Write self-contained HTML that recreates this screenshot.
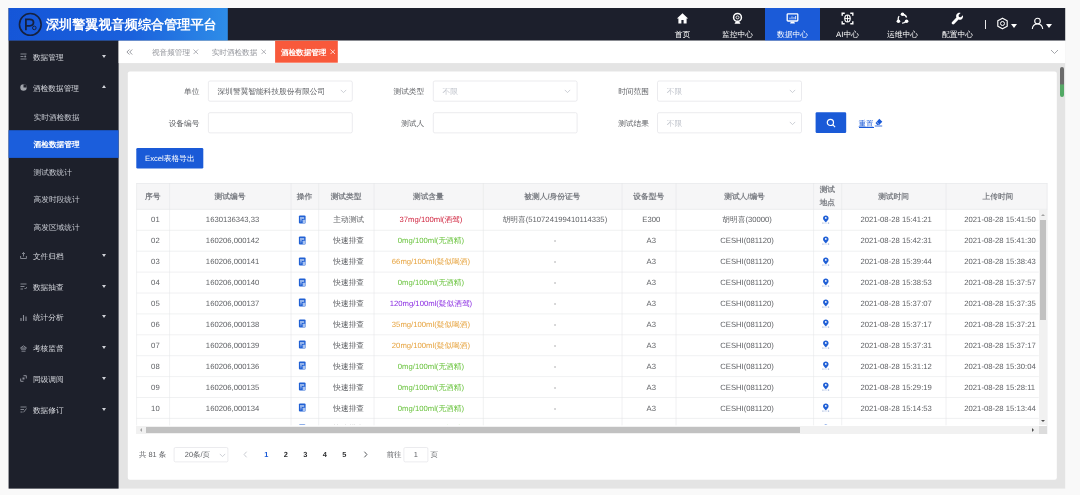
<!DOCTYPE html>
<html lang="zh">
<head>
<meta charset="utf-8">
<title>深圳警翼视音频综合管理平台</title>
<style>
*{box-sizing:border-box;margin:0;padding:0}
html,body{width:1080px;height:495px;overflow:hidden;background:#f9f9f9;font-family:"Liberation Sans",sans-serif;font-size:7.7px;color:#606266;text-rendering:geometricPrecision}
body{position:relative}
#w{position:absolute;left:0;top:0;width:1080px;height:495px;filter:blur(0.4px)}
.a{position:absolute;white-space:nowrap}
.c{text-align:center}
#ttl{left:45.9px;top:14.6px;width:176px;height:20px;line-height:20px;font-size:13.15px;font-weight:bold;color:#fff}
.nv{top:8px;width:55px;height:32.6px;color:#fff}
.nv span{position:absolute;left:0;width:55px;top:22.3px;height:9px;line-height:9px;text-align:center;font-size:7.8px;color:#fff}
.nv svg{position:absolute;left:21px;top:4.3px}
.mi{left:8.5px;width:110px;color:#d5d7dd}
.mi b{position:absolute;left:24.4px;font-weight:normal;top:1.25px}
.mi.s b{left:25px;top:0.9px;color:#c6c9d1}
.mi.act b{color:#fff;font-weight:bold}
.car{position:absolute;left:93.6px;width:0;height:0;border-left:2.8px solid transparent;border-right:2.8px solid transparent;border-top:3.3px solid #d0d2d8}
.car.up{border-top:none;border-bottom:3.3px solid #d0d2d8}
.mi svg{position:absolute;left:11.3px;opacity:.72}
.tb{top:40.6px;height:22px;line-height:23.2px;font-size:7.6px;color:#95979d}
.tb.on{color:#fff;top:40.6px;height:22px;line-height:23.2px;font-weight:bold}

.lb{height:20.8px;line-height:20.8px;padding-top:1.4px;text-align:right;color:#606266}
.ip{height:20.8px;border:0.7px solid transparent;line-height:19.4px;padding-top:0.7px;padding-left:8.5px;color:#606266}
.ip.ph{color:#c0c4cc}
.chv{position:absolute;top:7.6px;width:6px;height:5px}
.btn{color:#fff;text-align:center}
.hc{top:183.2px;height:26.2px;line-height:26.2px;padding-top:0.7px;text-align:center;color:#7b7e84;font-weight:bold}
.vl{width:0.6px;background:#e9ebef}
.hl{height:0.6px;background:#eaecf0;left:136.3px;width:902.5px}
.td{height:20.9px;line-height:20.9px;text-align:center;color:#606266;overflow:hidden}
.pg{top:447.2px;height:15px;line-height:15px;color:#606266;font-size:7.4px}
</style>
</head>
<body>
<div id="w">
<svg class="a" style="left:0;top:0" width="1080" height="495" viewBox="0 0 1080 495"><defs><linearGradient id="lg" x1="0" x2="1" y1="0" y2="0"><stop offset="0" stop-color="#1556d8"/><stop offset="0.55" stop-color="#1a60dc"/><stop offset="1" stop-color="#2e8de8"/></linearGradient></defs><rect x="8.6" y="8" width="1056.6" height="480.6" fill="#e4e4e4"/><rect x="8.6" y="8" width="1056.6" height="32.7" fill="#1c1f2c"/><rect x="8.6" y="8" width="219.2" height="32.7" fill="url(#lg)"/><rect x="765" y="8" width="55" height="32.7" fill="#1b5bd8"/><rect x="8.6" y="40.7" width="110" height="447.9" fill="#1d202b"/><rect x="8.6" y="130.2" width="110" height="27.7" fill="#1b5edc"/><rect x="118.6" y="40.7" width="946.6" height="22.4" fill="#fff"/><rect x="275.1" y="40.7" width="62.7" height="22" fill="#f8593b"/><rect x="127.8" y="71.6" width="929" height="408.2" rx="2" fill="#fff"/><rect x="208.4" y="81" width="143.9" height="20.2" rx="1.6" fill="#fff" stroke="#dddee3" stroke-width="0.6"/><rect x="433.3" y="81" width="143.8" height="20.2" rx="1.6" fill="#fff" stroke="#dddee3" stroke-width="0.6"/><rect x="657.5" y="81" width="144" height="20.2" rx="1.6" fill="#fff" stroke="#dddee3" stroke-width="0.6"/><rect x="208.4" y="112.7" width="143.9" height="20.2" rx="1.6" fill="#fff" stroke="#dddee3" stroke-width="0.6"/><rect x="433.3" y="112.7" width="143.8" height="20.2" rx="1.6" fill="#fff" stroke="#dddee3" stroke-width="0.6"/><rect x="657.5" y="112.7" width="144" height="20.2" rx="1.6" fill="#fff" stroke="#dddee3" stroke-width="0.6"/><rect x="815.6" y="112.3" width="30.6" height="20.8" rx="1.3" fill="#1a5ad7"/><rect x="136.3" y="148" width="67" height="20.6" rx="1.3" fill="#1a5ad7"/><rect x="136.4" y="183.2" width="911" height="26.2" fill="#f6f6f7"/><path d="M136.4 183.5h911M136.4 209.4h911" stroke="#e4e5e8" stroke-width="0.55"/><path d="M136.4 230.3h902.4M136.4 251.2h902.4M136.4 272.1h902.4M136.4 293h902.4M136.4 313.9h902.4M136.4 334.8h902.4M136.4 355.7h902.4M136.4 376.6h902.4M136.4 397.5h902.4M136.4 418.4h902.4" stroke="#e4e5e8" stroke-width="0.55"/><path d="M136.6 183.2v242.2M169.6 183.2v242.2M291 183.2v242.2M318.7 183.2v242.2M374 183.2v242.2M483.3 183.2v242.2M622 183.2v242.2M676 183.2v242.2M813.6 183.2v242.2M841.7 183.2v242.2M946 183.2v242.2M1047.1 183.2v250.9" stroke="#e4e5e8" stroke-width="0.55"/><rect x="174.1" y="447.5" width="53.8" height="14.4" rx="1.4" fill="#fff" stroke="#dddee3" stroke-width="0.6"/><rect x="403.9" y="447.5" width="24" height="14.4" rx="1.4" fill="#fff" stroke="#dddee3" stroke-width="0.6"/></svg>
<svg class="a" style="left:17.5px;top:11.5px" width="25" height="25" viewBox="0 0 25 25"><circle cx="12.3" cy="12.4" r="10.85" fill="none" stroke="#16213f" stroke-width="1.6"/><path d="M7.9 18.2V7.4h3.7c2.5 0 3.9 1.2 3.9 3.2s-1.4 3.2-3.9 3.2H8.1" fill="none" stroke="#16213f" stroke-width="1.8"/><circle cx="16.3" cy="15.9" r="1.8" fill="none" stroke="#16213f" stroke-width="1"/></svg>
<div class="a" id="ttl">深圳警翼视音频综合管理平台</div>
<div class="a nv" style="left:655px"><svg width="13" height="13" viewBox="0 0 13 13"><path d="M6.5 1.2 0.9 6.4h1.5v5h3V8h2.2v3.4h3v-5h1.5z" fill="#fff"/></svg><span>首页</span></div>
<div class="a nv" style="left:710px"><svg width="13" height="13" viewBox="0 0 13 13"><circle cx="6.5" cy="5.4" r="3.9" fill="none" stroke="#fff" stroke-width="1.5"/><circle cx="6.5" cy="5.4" r="1.5" fill="none" stroke="#fff" stroke-width="0.9"/><path d="M3.6 11.8c.4-1.6 1.3-2.2 2.9-2.2s2.5.6 2.9 2.2z" fill="#fff"/></svg><span>监控中心</span></div>
<div class="a nv on" style="left:765px"><svg width="13" height="13" viewBox="0 0 13 13"><rect x="1.2" y="1.8" width="10.6" height="7.2" rx="0.8" fill="none" stroke="#fff" stroke-width="1.3"/><path d="M4 7.3V5.6M6 7.3V4.4M8 7.3V5M9.6 7.3V4" stroke="#fff" stroke-width="0.8"/><path d="M4 11.4h5l-.8-1.6H4.8z" fill="#fff"/></svg><span>数据中心</span></div>
<div class="a nv" style="left:820px"><svg width="13" height="13" viewBox="0 0 13 13"><path d="M1.2 3.8V1.3h2.5M9.3 1.3h2.5v2.5M11.8 9.2v2.5H9.3M3.7 11.7H1.2V9.2" fill="none" stroke="#fff" stroke-width="1.4"/><ellipse cx="6.5" cy="6.5" rx="2.7" ry="3.5" fill="none" stroke="#fff" stroke-width="1.2"/><path d="M6.5 3v7M3.8 6.5h5.4" stroke="#fff" stroke-width="0.9"/></svg><span>AI中心</span></div>
<div class="a nv" style="left:875px"><svg width="13" height="13" viewBox="0 0 13 13"><circle cx="6.5" cy="6.8" r="4.3" fill="none" stroke="#fff" stroke-width="1.3" stroke-dasharray="5 4" stroke-dashoffset="-2"/><circle cx="6.5" cy="2.3" r="1.8" fill="#fff"/><circle cx="2.4" cy="9.3" r="1.8" fill="#fff"/><circle cx="10.6" cy="9.3" r="1.8" fill="#fff"/></svg><span>运维中心</span></div>
<div class="a nv" style="left:930px"><svg width="13" height="13" viewBox="0 0 13 13"><path d="M11.9 3.2 9.9 5.2 7.9 4.9 7.6 2.9 9.6 0.9C8 0.4 6.3 1 5.5 2.5 5 3.5 5 4.6 5.4 5.5L1.1 9.9c-.6.6-.6 1.5 0 2.1s1.5.6 2.1 0L7.5 7.6c1.6.6 3.4-.1 4.2-1.7.4-.9.5-1.8.2-2.7z" fill="#fff"/></svg><span>配置中心</span></div>
<div class="a" style="left:984.8px;top:20.3px;width:0.9px;height:9.2px;background:#e8e8ea"></div>
<svg class="a" style="left:996.1px;top:17px" width="13" height="13" viewBox="0 0 13 13"><path d="M6.5 1.2 11.2 3.85v5.3L6.5 11.8 1.8 9.15V3.85z" fill="none" stroke="#fff" stroke-width="1.15" stroke-linejoin="round"/><circle cx="6.5" cy="6.5" r="2" fill="none" stroke="#fff" stroke-width="1"/></svg>
<div class="a" style="left:1011.4px;top:24.1px;width:0;height:0;border-left:3.3px solid transparent;border-right:3.3px solid transparent;border-top:4px solid #fff"></div>
<svg class="a" style="left:1030.7px;top:17px" width="13" height="13" viewBox="0 0 13 13"><circle cx="6.5" cy="4" r="2.8" fill="none" stroke="#fff" stroke-width="1.1"/><path d="M1.3 12c.3-3.2 2.2-5 5.2-5s4.9 1.8 5.2 5" fill="none" stroke="#fff" stroke-width="1.1"/></svg>
<div class="a" style="left:1045.6px;top:24.1px;width:0;height:0;border-left:3.3px solid transparent;border-right:3.3px solid transparent;border-top:4px solid #fff"></div>
<div class="a mi" style="top:41.5px;height:30.8px"><svg style="top:11.7px" width="7" height="7" viewBox="0 0 7 7"><path d="M0.5 1h6M0.5 3.5h3M0.5 6h6" stroke="#b9bcc5" stroke-width="0.9"/><circle cx="5.2" cy="3.5" r="1" fill="#b9bcc5"/></svg><b style="line-height:30.8px">数据管理</b><i class="car" style="top:13.2px"></i></div>
<div class="a mi" style="top:72.3px;height:30.8px"><svg style="top:11.7px" width="7" height="7" viewBox="0 0 7 7"><circle cx="3.5" cy="3.5" r="3.2" fill="#d5d7dd"/><path d="M3.5 3.5V0.3A3.2 3.2 0 0 1 6.7 3.5z" fill="#1d1f2a"/></svg><b style="line-height:30.8px">酒检数据管理</b><i class="car up" style="top:13.2px"></i></div>
<div class="a mi s" style="top:103.1px;height:27.5px"><b style="line-height:27.5px">实时酒检数据</b></div>
<div class="a mi s act" style="top:130.6px;height:27.5px"><b style="line-height:27.5px">酒检数据管理</b></div>
<div class="a mi s" style="top:158.1px;height:27.5px"><b style="line-height:27.5px">测试数统计</b></div>
<div class="a mi s" style="top:185.6px;height:27.5px"><b style="line-height:27.5px">高发时段统计</b></div>
<div class="a mi s" style="top:213.1px;height:27.5px"><b style="line-height:27.5px">高发区域统计</b></div>
<div class="a mi" style="top:240.6px;height:30.8px"><svg style="top:11.7px" width="7" height="7" viewBox="0 0 7 7"><path d="M0.6 4v2.5h5.8V4M3.5 0.5v4M2 2l1.5-1.5L5 2" fill="none" stroke="#b9bcc5" stroke-width="0.9"/></svg><b style="line-height:30.8px">文件归档</b><i class="car" style="top:13.2px"></i></div>
<div class="a mi" style="top:271.4px;height:30.8px"><svg style="top:11.7px" width="7" height="7" viewBox="0 0 7 7"><path d="M0.5 1h6M0.5 3.5h4M0.5 6h2.5M4.5 5l1 1 1.5-2" fill="none" stroke="#b9bcc5" stroke-width="0.9"/></svg><b style="line-height:30.8px">数据抽查</b><i class="car" style="top:13.2px"></i></div>
<div class="a mi" style="top:302.2px;height:30.8px"><svg style="top:11.7px" width="7" height="7" viewBox="0 0 7 7"><path d="M1 7V4M3.5 7V1M6 7V2.5" stroke="#b9bcc5" stroke-width="1.1"/></svg><b style="line-height:30.8px">统计分析</b><i class="car" style="top:13.2px"></i></div>
<div class="a mi" style="top:333px;height:30.8px"><svg style="top:11.7px" width="7" height="7" viewBox="0 0 7 7"><path d="M3.5 0.8 6.5 3H0.5zM1 4.2h5M1.5 6.2h4" fill="none" stroke="#b9bcc5" stroke-width="0.9"/></svg><b style="line-height:30.8px">考核监督</b><i class="car" style="top:13.2px"></i></div>
<div class="a mi" style="top:363.8px;height:30.8px"><svg style="top:11.7px" width="7" height="7" viewBox="0 0 7 7"><path d="M0.7 3.5V6.3H3.5M6.3 3.5V0.7H3.5" fill="none" stroke="#b9bcc5" stroke-width="1"/><rect x="2.5" y="2.5" width="2" height="2" fill="#b9bcc5"/></svg><b style="line-height:30.8px">同级调阅</b><i class="car" style="top:13.2px"></i></div>
<div class="a mi" style="top:394.6px;height:30.8px"><svg style="top:11.7px" width="7" height="7" viewBox="0 0 7 7"><path d="M0.5 1h6M0.5 3.5h3.5M0.5 6h2M6.5 2.5 3.5 6.3" fill="none" stroke="#b9bcc5" stroke-width="0.9"/></svg><b style="line-height:30.8px">数据修订</b><i class="car" style="top:13.2px"></i></div>
<svg class="a" style="left:125.6px;top:48.7px" width="7" height="6" viewBox="0 0 7 6"><path d="M3.4 0.5 0.9 3l2.5 2.5M6.2 0.5 3.7 3l2.5 2.5" fill="none" stroke="#96989e" stroke-width="1"/></svg>
<div class="a tb" style="left:152px">视音频管理 <svg style="vertical-align:-0.4px;margin-left:1.2px" width="5.6" height="5.6" viewBox="0 0 5.6 5.6"><path d="M0.5 0.5l4.6 4.6M5.1 0.5 0.5 5.1" stroke="#9a9ca2" stroke-width="0.75"/></svg></div>
<div class="a tb" style="left:211.7px">实时酒检数据 <svg style="vertical-align:-0.4px;margin-left:1.2px" width="5.6" height="5.6" viewBox="0 0 5.6 5.6"><path d="M0.5 0.5l4.6 4.6M5.1 0.5 0.5 5.1" stroke="#9a9ca2" stroke-width="0.75"/></svg></div>
<div class="a tb on" style="left:275.1px;width:62.5px;padding-left:5.8px">酒检数据管理 <svg style="vertical-align:-0.4px;margin-left:1.2px" width="5.6" height="5.6" viewBox="0 0 5.6 5.6"><path d="M0.5 0.5l4.6 4.6M5.1 0.5 0.5 5.1" stroke="#fff" stroke-width="0.75"/></svg></div>
<svg class="a" style="left:1049.5px;top:48.5px" width="9" height="6" viewBox="0 0 9 6"><path d="M1 1l3.5 3.5L8 1" fill="none" stroke="#9a9ca2" stroke-width="0.9"/></svg>
<div class="a lb" style="left:139.4px;width:60px;top:80.7px">单位</div>
<div class="a ip" style="left:208.1px;width:144.6px;top:80.7px">深圳警翼智能科技股份有限公司</div>
<svg class="a" style="left:340px;top:89px" width="7" height="5" viewBox="0 0 7 5"><path d="M0.8 0.9l2.7 2.7 2.7-2.7" fill="none" stroke="#c0c4cc" stroke-width="0.8"/></svg>
<div class="a lb" style="left:364.2px;width:60px;top:80.7px">测试类型</div>
<div class="a ip ph" style="left:433px;width:144.4px;top:80.7px">不限</div>
<svg class="a" style="left:564px;top:89px" width="7" height="5" viewBox="0 0 7 5"><path d="M0.8 0.9l2.7 2.7 2.7-2.7" fill="none" stroke="#c0c4cc" stroke-width="0.8"/></svg>
<div class="a lb" style="left:588.9px;width:60px;top:80.7px">时间范围</div>
<div class="a ip ph" style="left:657.2px;width:144.6px;top:80.7px">不限</div>
<svg class="a" style="left:789px;top:89px" width="7" height="5" viewBox="0 0 7 5"><path d="M0.8 0.9l2.7 2.7 2.7-2.7" fill="none" stroke="#c0c4cc" stroke-width="0.8"/></svg>
<div class="a lb" style="left:139.4px;width:60px;top:112.4px">设备编号</div>
<div class="a ip" style="left:208.1px;width:144.6px;top:112.4px"></div>
<div class="a lb" style="left:364.2px;width:60px;top:112.4px">测试人</div>
<div class="a ip" style="left:433px;width:144.4px;top:112.4px"></div>
<div class="a lb" style="left:588.9px;width:60px;top:112.4px">测试结果</div>
<div class="a ip ph" style="left:657.2px;width:144.6px;top:112.4px">不限</div>
<svg class="a" style="left:789px;top:120.6px" width="7" height="5" viewBox="0 0 7 5"><path d="M0.8 0.9l2.7 2.7 2.7-2.7" fill="none" stroke="#c0c4cc" stroke-width="0.8"/></svg>
<div class="a btn" style="left:815.6px;top:112.3px;width:30.6px;height:20.8px"></div>
<svg class="a" style="left:825.9px;top:117.6px" width="10" height="10" viewBox="0 0 10 10"><circle cx="4.4" cy="4.4" r="3.1" fill="none" stroke="#fff" stroke-width="1.2"/><path d="M6.7 6.7 9.1 9.1" stroke="#fff" stroke-width="1.2"/></svg>
<div class="a" style="left:858.6px;top:118.7px;height:9.2px;line-height:10px;color:#1a5ad7;font-size:7.5px;border-bottom:0.7px solid #1a5ad7">重置</div>
<svg class="a" style="left:874.1px;top:117.9px" width="9" height="9" viewBox="0 0 9 9"><path d="M5.3 0.7 8.3 3.7 5.1 6.9H3.3L1.5 5.1z" fill="#1a5ad7"/><path d="M2.6 4 5 6.4" stroke="#fff" stroke-width="0.6"/><path d="M0.8 8h7.4" stroke="#1a5ad7" stroke-width="0.85"/></svg>
<div class="a btn" style="left:136.3px;top:148px;width:67px;height:20.6px;line-height:20.4px;padding-top:1px;font-size:7.7px">Excel表格导出</div>
<div class="a hc" style="left:136.3px;width:33px">序号</div>
<div class="a hc" style="left:169.3px;width:121.4px">测试编号</div>
<div class="a hc" style="left:290.7px;width:27.7px">操作</div>
<div class="a hc" style="left:318.4px;width:55.3px">测试类型</div>
<div class="a hc" style="left:373.7px;width:109.3px">测试含量</div>
<div class="a hc" style="left:483px;width:138.7px">被测人/身份证号</div>
<div class="a hc" style="left:621.7px;width:54px">设备型号</div>
<div class="a hc" style="left:675.7px;width:137.6px">测试人/编号</div>
<div class="a hc" style="left:813.3px;width:28.1px;line-height:12.7px;padding-top:0.75px">测试<br>地点</div>
<div class="a hc" style="left:841.4px;width:104.3px">测试时间</div>
<div class="a hc" style="left:947.1px;width:101.6px">上传时间</div>
<div class="a" style="left:136.3px;top:209.4px;width:902.5px;height:216.1px;overflow:hidden">
<div class="a td" style="left:2.6px;width:33px;top:1.05px">01</div>
<div class="a td" style="left:35.6px;width:121.4px;top:1.05px">1630136343,33</div>
<svg class="a" style="left:162.2px;top:5.5px" width="8" height="9" viewBox="0 0 8 9"><rect x="0.9" y="0.4" width="6.7" height="8.1" rx="1.1" fill="#2060d4"/><path d="M2 3h4.2" stroke="#fff" stroke-width="1.05"/><path d="M2 4.9h1.9" stroke="#e8effc" stroke-width="0.8"/><rect x="4.7" y="4.7" width="2.8" height="3.5" rx="0.5" fill="#a8c2f0"/><path d="M2 6.7h1.5" stroke="#6f9ae6" stroke-width="0.7"/></svg>
<div class="a td" style="left:184.7px;width:55.3px;top:1.05px">主动测试</div>
<div class="a td" style="left:240px;width:109.3px;top:1.05px;color:#cf1f3a">37mg/100ml(酒驾)</div>
<div class="a td" style="left:349.3px;width:138.7px;top:1.05px">胡明喜(510724199410114335)</div>
<div class="a td" style="left:488px;width:54px;top:1.05px">E300</div>
<div class="a td" style="left:542px;width:137.6px;top:1.05px">胡明喜(30000)</div>
<svg class="a" style="left:685.6px;top:5.6px" width="7.6" height="8.55" viewBox="0 0 8 9" overflow="visible"><path d="M4 0.5C2.3 0.5 1.1 1.7 1.1 3.3 1.1 5.2 4 7.7 4 7.7S6.9 5.2 6.9 3.3C6.9 1.7 5.7 0.5 4 0.5z" fill="#1f5fd6"/><circle cx="4" cy="3.1" r="0.95" fill="#fff"/><circle cx="1" cy="8.4" r="0.6" fill="#5f80c0"/><circle cx="7" cy="8.4" r="0.6" fill="#5f80c0"/><path d="M2.2 8.5h3.6" stroke="#9db3de" stroke-width="0.5"/></svg>
<div class="a td" style="left:707.7px;width:104.3px;top:1.05px">2021-08-28 15:41:21</div>
<div class="a td" style="left:812px;width:101.6px;top:1.05px;text-align:left;padding-left:16px">2021-08-28 15:41:50</div>
<div class="a td" style="left:2.6px;width:33px;top:21.95px">02</div>
<div class="a td" style="left:35.6px;width:121.4px;top:21.95px">160206,000142</div>
<svg class="a" style="left:162.2px;top:26.4px" width="8" height="9" viewBox="0 0 8 9"><rect x="0.9" y="0.4" width="6.7" height="8.1" rx="1.1" fill="#2060d4"/><path d="M2 3h4.2" stroke="#fff" stroke-width="1.05"/><path d="M2 4.9h1.9" stroke="#e8effc" stroke-width="0.8"/><rect x="4.7" y="4.7" width="2.8" height="3.5" rx="0.5" fill="#a8c2f0"/><path d="M2 6.7h1.5" stroke="#6f9ae6" stroke-width="0.7"/></svg>
<div class="a td" style="left:184.7px;width:55.3px;top:21.95px">快速排查</div>
<div class="a td" style="left:240px;width:109.3px;top:21.95px;color:#67c23a">0mg/100ml(无酒精)</div>
<div class="a td" style="left:349.3px;width:138.7px;top:21.95px">-</div>
<div class="a td" style="left:488px;width:54px;top:21.95px">A3</div>
<div class="a td" style="left:542px;width:137.6px;top:21.95px">CESHI(081120)</div>
<svg class="a" style="left:685.6px;top:26.5px" width="7.6" height="8.55" viewBox="0 0 8 9" overflow="visible"><path d="M4 0.5C2.3 0.5 1.1 1.7 1.1 3.3 1.1 5.2 4 7.7 4 7.7S6.9 5.2 6.9 3.3C6.9 1.7 5.7 0.5 4 0.5z" fill="#1f5fd6"/><circle cx="4" cy="3.1" r="0.95" fill="#fff"/><circle cx="1" cy="8.4" r="0.6" fill="#5f80c0"/><circle cx="7" cy="8.4" r="0.6" fill="#5f80c0"/><path d="M2.2 8.5h3.6" stroke="#9db3de" stroke-width="0.5"/></svg>
<div class="a td" style="left:707.7px;width:104.3px;top:21.95px">2021-08-28 15:42:31</div>
<div class="a td" style="left:812px;width:101.6px;top:21.95px;text-align:left;padding-left:16px">2021-08-28 15:41:30</div>
<div class="a td" style="left:2.6px;width:33px;top:42.85px">03</div>
<div class="a td" style="left:35.6px;width:121.4px;top:42.85px">160206,000141</div>
<svg class="a" style="left:162.2px;top:47.4px" width="8" height="9" viewBox="0 0 8 9"><rect x="0.9" y="0.4" width="6.7" height="8.1" rx="1.1" fill="#2060d4"/><path d="M2 3h4.2" stroke="#fff" stroke-width="1.05"/><path d="M2 4.9h1.9" stroke="#e8effc" stroke-width="0.8"/><rect x="4.7" y="4.7" width="2.8" height="3.5" rx="0.5" fill="#a8c2f0"/><path d="M2 6.7h1.5" stroke="#6f9ae6" stroke-width="0.7"/></svg>
<div class="a td" style="left:184.7px;width:55.3px;top:42.85px">快速排查</div>
<div class="a td" style="left:240px;width:109.3px;top:42.85px;color:#e6a23c">66mg/100ml(疑似喝酒)</div>
<div class="a td" style="left:349.3px;width:138.7px;top:42.85px">-</div>
<div class="a td" style="left:488px;width:54px;top:42.85px">A3</div>
<div class="a td" style="left:542px;width:137.6px;top:42.85px">CESHI(081120)</div>
<svg class="a" style="left:685.6px;top:47.4px" width="7.6" height="8.55" viewBox="0 0 8 9" overflow="visible"><path d="M4 0.5C2.3 0.5 1.1 1.7 1.1 3.3 1.1 5.2 4 7.7 4 7.7S6.9 5.2 6.9 3.3C6.9 1.7 5.7 0.5 4 0.5z" fill="#1f5fd6"/><circle cx="4" cy="3.1" r="0.95" fill="#fff"/><circle cx="1" cy="8.4" r="0.6" fill="#5f80c0"/><circle cx="7" cy="8.4" r="0.6" fill="#5f80c0"/><path d="M2.2 8.5h3.6" stroke="#9db3de" stroke-width="0.5"/></svg>
<div class="a td" style="left:707.7px;width:104.3px;top:42.85px">2021-08-28 15:39:44</div>
<div class="a td" style="left:812px;width:101.6px;top:42.85px;text-align:left;padding-left:16px">2021-08-28 15:38:43</div>
<div class="a td" style="left:2.6px;width:33px;top:63.75px">04</div>
<div class="a td" style="left:35.6px;width:121.4px;top:63.75px">160206,000140</div>
<svg class="a" style="left:162.2px;top:68.2px" width="8" height="9" viewBox="0 0 8 9"><rect x="0.9" y="0.4" width="6.7" height="8.1" rx="1.1" fill="#2060d4"/><path d="M2 3h4.2" stroke="#fff" stroke-width="1.05"/><path d="M2 4.9h1.9" stroke="#e8effc" stroke-width="0.8"/><rect x="4.7" y="4.7" width="2.8" height="3.5" rx="0.5" fill="#a8c2f0"/><path d="M2 6.7h1.5" stroke="#6f9ae6" stroke-width="0.7"/></svg>
<div class="a td" style="left:184.7px;width:55.3px;top:63.75px">快速排查</div>
<div class="a td" style="left:240px;width:109.3px;top:63.75px;color:#67c23a">0mg/100ml(无酒精)</div>
<div class="a td" style="left:349.3px;width:138.7px;top:63.75px">-</div>
<div class="a td" style="left:488px;width:54px;top:63.75px">A3</div>
<div class="a td" style="left:542px;width:137.6px;top:63.75px">CESHI(081120)</div>
<svg class="a" style="left:685.6px;top:68.3px" width="7.6" height="8.55" viewBox="0 0 8 9" overflow="visible"><path d="M4 0.5C2.3 0.5 1.1 1.7 1.1 3.3 1.1 5.2 4 7.7 4 7.7S6.9 5.2 6.9 3.3C6.9 1.7 5.7 0.5 4 0.5z" fill="#1f5fd6"/><circle cx="4" cy="3.1" r="0.95" fill="#fff"/><circle cx="1" cy="8.4" r="0.6" fill="#5f80c0"/><circle cx="7" cy="8.4" r="0.6" fill="#5f80c0"/><path d="M2.2 8.5h3.6" stroke="#9db3de" stroke-width="0.5"/></svg>
<div class="a td" style="left:707.7px;width:104.3px;top:63.75px">2021-08-28 15:38:53</div>
<div class="a td" style="left:812px;width:101.6px;top:63.75px;text-align:left;padding-left:16px">2021-08-28 15:37:57</div>
<div class="a td" style="left:2.6px;width:33px;top:84.65px">05</div>
<div class="a td" style="left:35.6px;width:121.4px;top:84.65px">160206,000137</div>
<svg class="a" style="left:162.2px;top:89.1px" width="8" height="9" viewBox="0 0 8 9"><rect x="0.9" y="0.4" width="6.7" height="8.1" rx="1.1" fill="#2060d4"/><path d="M2 3h4.2" stroke="#fff" stroke-width="1.05"/><path d="M2 4.9h1.9" stroke="#e8effc" stroke-width="0.8"/><rect x="4.7" y="4.7" width="2.8" height="3.5" rx="0.5" fill="#a8c2f0"/><path d="M2 6.7h1.5" stroke="#6f9ae6" stroke-width="0.7"/></svg>
<div class="a td" style="left:184.7px;width:55.3px;top:84.65px">快速排查</div>
<div class="a td" style="left:240px;width:109.3px;top:84.65px;color:#8a2be2">120mg/100ml(疑似酒驾)</div>
<div class="a td" style="left:349.3px;width:138.7px;top:84.65px">-</div>
<div class="a td" style="left:488px;width:54px;top:84.65px">A3</div>
<div class="a td" style="left:542px;width:137.6px;top:84.65px">CESHI(081120)</div>
<svg class="a" style="left:685.6px;top:89.2px" width="7.6" height="8.55" viewBox="0 0 8 9" overflow="visible"><path d="M4 0.5C2.3 0.5 1.1 1.7 1.1 3.3 1.1 5.2 4 7.7 4 7.7S6.9 5.2 6.9 3.3C6.9 1.7 5.7 0.5 4 0.5z" fill="#1f5fd6"/><circle cx="4" cy="3.1" r="0.95" fill="#fff"/><circle cx="1" cy="8.4" r="0.6" fill="#5f80c0"/><circle cx="7" cy="8.4" r="0.6" fill="#5f80c0"/><path d="M2.2 8.5h3.6" stroke="#9db3de" stroke-width="0.5"/></svg>
<div class="a td" style="left:707.7px;width:104.3px;top:84.65px">2021-08-28 15:37:07</div>
<div class="a td" style="left:812px;width:101.6px;top:84.65px;text-align:left;padding-left:16px">2021-08-28 15:37:35</div>
<div class="a td" style="left:2.6px;width:33px;top:105.55px">06</div>
<div class="a td" style="left:35.6px;width:121.4px;top:105.55px">160206,000138</div>
<svg class="a" style="left:162.2px;top:110px" width="8" height="9" viewBox="0 0 8 9"><rect x="0.9" y="0.4" width="6.7" height="8.1" rx="1.1" fill="#2060d4"/><path d="M2 3h4.2" stroke="#fff" stroke-width="1.05"/><path d="M2 4.9h1.9" stroke="#e8effc" stroke-width="0.8"/><rect x="4.7" y="4.7" width="2.8" height="3.5" rx="0.5" fill="#a8c2f0"/><path d="M2 6.7h1.5" stroke="#6f9ae6" stroke-width="0.7"/></svg>
<div class="a td" style="left:184.7px;width:55.3px;top:105.55px">快速排查</div>
<div class="a td" style="left:240px;width:109.3px;top:105.55px;color:#e6a23c">35mg/100ml(疑似喝酒)</div>
<div class="a td" style="left:349.3px;width:138.7px;top:105.55px">-</div>
<div class="a td" style="left:488px;width:54px;top:105.55px">A3</div>
<div class="a td" style="left:542px;width:137.6px;top:105.55px">CESHI(081120)</div>
<svg class="a" style="left:685.6px;top:110.1px" width="7.6" height="8.55" viewBox="0 0 8 9" overflow="visible"><path d="M4 0.5C2.3 0.5 1.1 1.7 1.1 3.3 1.1 5.2 4 7.7 4 7.7S6.9 5.2 6.9 3.3C6.9 1.7 5.7 0.5 4 0.5z" fill="#1f5fd6"/><circle cx="4" cy="3.1" r="0.95" fill="#fff"/><circle cx="1" cy="8.4" r="0.6" fill="#5f80c0"/><circle cx="7" cy="8.4" r="0.6" fill="#5f80c0"/><path d="M2.2 8.5h3.6" stroke="#9db3de" stroke-width="0.5"/></svg>
<div class="a td" style="left:707.7px;width:104.3px;top:105.55px">2021-08-28 15:37:17</div>
<div class="a td" style="left:812px;width:101.6px;top:105.55px;text-align:left;padding-left:16px">2021-08-28 15:37:21</div>
<div class="a td" style="left:2.6px;width:33px;top:126.45px">07</div>
<div class="a td" style="left:35.6px;width:121.4px;top:126.45px">160206,000139</div>
<svg class="a" style="left:162.2px;top:130.9px" width="8" height="9" viewBox="0 0 8 9"><rect x="0.9" y="0.4" width="6.7" height="8.1" rx="1.1" fill="#2060d4"/><path d="M2 3h4.2" stroke="#fff" stroke-width="1.05"/><path d="M2 4.9h1.9" stroke="#e8effc" stroke-width="0.8"/><rect x="4.7" y="4.7" width="2.8" height="3.5" rx="0.5" fill="#a8c2f0"/><path d="M2 6.7h1.5" stroke="#6f9ae6" stroke-width="0.7"/></svg>
<div class="a td" style="left:184.7px;width:55.3px;top:126.45px">快速排查</div>
<div class="a td" style="left:240px;width:109.3px;top:126.45px;color:#e6a23c">20mg/100ml(疑似喝酒)</div>
<div class="a td" style="left:349.3px;width:138.7px;top:126.45px">-</div>
<div class="a td" style="left:488px;width:54px;top:126.45px">A3</div>
<div class="a td" style="left:542px;width:137.6px;top:126.45px">CESHI(081120)</div>
<svg class="a" style="left:685.6px;top:131px" width="7.6" height="8.55" viewBox="0 0 8 9" overflow="visible"><path d="M4 0.5C2.3 0.5 1.1 1.7 1.1 3.3 1.1 5.2 4 7.7 4 7.7S6.9 5.2 6.9 3.3C6.9 1.7 5.7 0.5 4 0.5z" fill="#1f5fd6"/><circle cx="4" cy="3.1" r="0.95" fill="#fff"/><circle cx="1" cy="8.4" r="0.6" fill="#5f80c0"/><circle cx="7" cy="8.4" r="0.6" fill="#5f80c0"/><path d="M2.2 8.5h3.6" stroke="#9db3de" stroke-width="0.5"/></svg>
<div class="a td" style="left:707.7px;width:104.3px;top:126.45px">2021-08-28 15:37:31</div>
<div class="a td" style="left:812px;width:101.6px;top:126.45px;text-align:left;padding-left:16px">2021-08-28 15:37:17</div>
<div class="a td" style="left:2.6px;width:33px;top:147.35px">08</div>
<div class="a td" style="left:35.6px;width:121.4px;top:147.35px">160206,000136</div>
<svg class="a" style="left:162.2px;top:151.8px" width="8" height="9" viewBox="0 0 8 9"><rect x="0.9" y="0.4" width="6.7" height="8.1" rx="1.1" fill="#2060d4"/><path d="M2 3h4.2" stroke="#fff" stroke-width="1.05"/><path d="M2 4.9h1.9" stroke="#e8effc" stroke-width="0.8"/><rect x="4.7" y="4.7" width="2.8" height="3.5" rx="0.5" fill="#a8c2f0"/><path d="M2 6.7h1.5" stroke="#6f9ae6" stroke-width="0.7"/></svg>
<div class="a td" style="left:184.7px;width:55.3px;top:147.35px">快速排查</div>
<div class="a td" style="left:240px;width:109.3px;top:147.35px;color:#67c23a">0mg/100ml(无酒精)</div>
<div class="a td" style="left:349.3px;width:138.7px;top:147.35px">-</div>
<div class="a td" style="left:488px;width:54px;top:147.35px">A3</div>
<div class="a td" style="left:542px;width:137.6px;top:147.35px">CESHI(081120)</div>
<svg class="a" style="left:685.6px;top:151.9px" width="7.6" height="8.55" viewBox="0 0 8 9" overflow="visible"><path d="M4 0.5C2.3 0.5 1.1 1.7 1.1 3.3 1.1 5.2 4 7.7 4 7.7S6.9 5.2 6.9 3.3C6.9 1.7 5.7 0.5 4 0.5z" fill="#1f5fd6"/><circle cx="4" cy="3.1" r="0.95" fill="#fff"/><circle cx="1" cy="8.4" r="0.6" fill="#5f80c0"/><circle cx="7" cy="8.4" r="0.6" fill="#5f80c0"/><path d="M2.2 8.5h3.6" stroke="#9db3de" stroke-width="0.5"/></svg>
<div class="a td" style="left:707.7px;width:104.3px;top:147.35px">2021-08-28 15:31:12</div>
<div class="a td" style="left:812px;width:101.6px;top:147.35px;text-align:left;padding-left:16px">2021-08-28 15:30:04</div>
<div class="a td" style="left:2.6px;width:33px;top:168.25px">09</div>
<div class="a td" style="left:35.6px;width:121.4px;top:168.25px">160206,000135</div>
<svg class="a" style="left:162.2px;top:172.7px" width="8" height="9" viewBox="0 0 8 9"><rect x="0.9" y="0.4" width="6.7" height="8.1" rx="1.1" fill="#2060d4"/><path d="M2 3h4.2" stroke="#fff" stroke-width="1.05"/><path d="M2 4.9h1.9" stroke="#e8effc" stroke-width="0.8"/><rect x="4.7" y="4.7" width="2.8" height="3.5" rx="0.5" fill="#a8c2f0"/><path d="M2 6.7h1.5" stroke="#6f9ae6" stroke-width="0.7"/></svg>
<div class="a td" style="left:184.7px;width:55.3px;top:168.25px">快速排查</div>
<div class="a td" style="left:240px;width:109.3px;top:168.25px;color:#67c23a">0mg/100ml(无酒精)</div>
<div class="a td" style="left:349.3px;width:138.7px;top:168.25px">-</div>
<div class="a td" style="left:488px;width:54px;top:168.25px">A3</div>
<div class="a td" style="left:542px;width:137.6px;top:168.25px">CESHI(081120)</div>
<svg class="a" style="left:685.6px;top:172.8px" width="7.6" height="8.55" viewBox="0 0 8 9" overflow="visible"><path d="M4 0.5C2.3 0.5 1.1 1.7 1.1 3.3 1.1 5.2 4 7.7 4 7.7S6.9 5.2 6.9 3.3C6.9 1.7 5.7 0.5 4 0.5z" fill="#1f5fd6"/><circle cx="4" cy="3.1" r="0.95" fill="#fff"/><circle cx="1" cy="8.4" r="0.6" fill="#5f80c0"/><circle cx="7" cy="8.4" r="0.6" fill="#5f80c0"/><path d="M2.2 8.5h3.6" stroke="#9db3de" stroke-width="0.5"/></svg>
<div class="a td" style="left:707.7px;width:104.3px;top:168.25px">2021-08-28 15:29:19</div>
<div class="a td" style="left:812px;width:101.6px;top:168.25px;text-align:left;padding-left:16px">2021-08-28 15:28:11</div>
<div class="a td" style="left:2.6px;width:33px;top:189.15px">10</div>
<div class="a td" style="left:35.6px;width:121.4px;top:189.15px">160206,000134</div>
<svg class="a" style="left:162.2px;top:193.6px" width="8" height="9" viewBox="0 0 8 9"><rect x="0.9" y="0.4" width="6.7" height="8.1" rx="1.1" fill="#2060d4"/><path d="M2 3h4.2" stroke="#fff" stroke-width="1.05"/><path d="M2 4.9h1.9" stroke="#e8effc" stroke-width="0.8"/><rect x="4.7" y="4.7" width="2.8" height="3.5" rx="0.5" fill="#a8c2f0"/><path d="M2 6.7h1.5" stroke="#6f9ae6" stroke-width="0.7"/></svg>
<div class="a td" style="left:184.7px;width:55.3px;top:189.15px">快速排查</div>
<div class="a td" style="left:240px;width:109.3px;top:189.15px;color:#67c23a">0mg/100ml(无酒精)</div>
<div class="a td" style="left:349.3px;width:138.7px;top:189.15px">-</div>
<div class="a td" style="left:488px;width:54px;top:189.15px">A3</div>
<div class="a td" style="left:542px;width:137.6px;top:189.15px">CESHI(081120)</div>
<svg class="a" style="left:685.6px;top:193.7px" width="7.6" height="8.55" viewBox="0 0 8 9" overflow="visible"><path d="M4 0.5C2.3 0.5 1.1 1.7 1.1 3.3 1.1 5.2 4 7.7 4 7.7S6.9 5.2 6.9 3.3C6.9 1.7 5.7 0.5 4 0.5z" fill="#1f5fd6"/><circle cx="4" cy="3.1" r="0.95" fill="#fff"/><circle cx="1" cy="8.4" r="0.6" fill="#5f80c0"/><circle cx="7" cy="8.4" r="0.6" fill="#5f80c0"/><path d="M2.2 8.5h3.6" stroke="#9db3de" stroke-width="0.5"/></svg>
<div class="a td" style="left:707.7px;width:104.3px;top:189.15px">2021-08-28 15:14:53</div>
<div class="a td" style="left:812px;width:101.6px;top:189.15px;text-align:left;padding-left:16px">2021-08-28 15:13:44</div>
<div class="a td" style="left:2.6px;width:33px;top:210.05px">11</div>
<div class="a td" style="left:35.6px;width:121.4px;top:210.05px">160206,000133</div>
<svg class="a" style="left:162.2px;top:214.5px" width="8" height="9" viewBox="0 0 8 9"><rect x="0.9" y="0.4" width="6.7" height="8.1" rx="1.1" fill="#2060d4"/><path d="M2 3h4.2" stroke="#fff" stroke-width="1.05"/><path d="M2 4.9h1.9" stroke="#e8effc" stroke-width="0.8"/><rect x="4.7" y="4.7" width="2.8" height="3.5" rx="0.5" fill="#a8c2f0"/><path d="M2 6.7h1.5" stroke="#6f9ae6" stroke-width="0.7"/></svg>
<div class="a td" style="left:184.7px;width:55.3px;top:210.05px">快速排查</div>
<div class="a td" style="left:240px;width:109.3px;top:210.05px;color:#67c23a">0mg/100ml(无酒精)</div>
<div class="a td" style="left:349.3px;width:138.7px;top:210.05px">-</div>
<div class="a td" style="left:488px;width:54px;top:210.05px">A3</div>
<div class="a td" style="left:542px;width:137.6px;top:210.05px">CESHI(081120)</div>
<svg class="a" style="left:685.6px;top:214.6px" width="7.6" height="8.55" viewBox="0 0 8 9" overflow="visible"><path d="M4 0.5C2.3 0.5 1.1 1.7 1.1 3.3 1.1 5.2 4 7.7 4 7.7S6.9 5.2 6.9 3.3C6.9 1.7 5.7 0.5 4 0.5z" fill="#1f5fd6"/><circle cx="4" cy="3.1" r="0.95" fill="#fff"/><circle cx="1" cy="8.4" r="0.6" fill="#5f80c0"/><circle cx="7" cy="8.4" r="0.6" fill="#5f80c0"/><path d="M2.2 8.5h3.6" stroke="#9db3de" stroke-width="0.5"/></svg>
<div class="a td" style="left:707.7px;width:104.3px;top:210.05px">2021-08-28 15:12:40</div>
<div class="a td" style="left:812px;width:101.6px;top:210.05px;text-align:left;padding-left:16px">2021-08-28 15:11:32</div>
</div>
<div class="a" style="left:1038.7px;top:209.5px;width:8.6px;height:215.7px;background:#f1f1f1"></div>
<div class="a" style="left:1039.6px;top:220.4px;width:6.8px;height:100px;background:#c1c1c1"></div>
<div class="a" style="left:1041px;top:214px;width:0;height:0;border-left:2px solid transparent;border-right:2px solid transparent;border-bottom:2.2px solid #a3a3a3"></div>
<div class="a" style="left:1041px;top:419.5px;width:0;height:0;border-left:2px solid transparent;border-right:2px solid transparent;border-top:2.2px solid #505050"></div>
<div class="a" style="left:136.3px;top:425.5px;width:911px;height:8.9px;background:#f1f1f1"></div>
<div class="a" style="left:146.1px;top:426.5px;width:654px;height:6.9px;background:#c1c1c1"></div>
<div class="a" style="left:139.8px;top:428px;width:0;height:0;border-top:2px solid transparent;border-bottom:2px solid transparent;border-right:2.2px solid #a3a3a3"></div>
<div class="a" style="left:1032.2px;top:428px;width:0;height:0;border-top:2px solid transparent;border-bottom:2px solid transparent;border-left:2.2px solid #505050"></div>
<div class="a" style="left:1038.7px;top:425.5px;width:8.6px;height:8.9px;background:#dcdcdc"></div>
<div class="a pg" style="left:139px">共 81 条</div>
<div class="a pg" style="left:173.8px;width:54.4px;border:0.7px solid transparent;padding-left:10px;line-height:13.6px">20条/页</div>
<svg class="a" style="left:218.8px;top:452.6px" width="7" height="5" viewBox="0 0 7 5"><path d="M0.8 0.9l2.7 2.7 2.7-2.7" fill="none" stroke="#c0c4cc" stroke-width="0.8"/></svg>
<svg class="a" style="left:242.8px;top:451.2px" width="5" height="7" viewBox="0 0 5 7"><path d="M3.6 0.7 1.1 3.5l2.5 2.8" fill="none" stroke="#bfc2c9" stroke-width="0.85"/></svg>
<div class="a pg c" style="left:258.2px;width:16px;color:#1a5ad7;font-weight:bold">1</div>
<div class="a pg c" style="left:277.8px;width:16px;color:#303133;font-weight:bold">2</div>
<div class="a pg c" style="left:297.3px;width:16px;color:#303133;font-weight:bold">3</div>
<div class="a pg c" style="left:316.9px;width:16px;color:#303133;font-weight:bold">4</div>
<div class="a pg c" style="left:336.4px;width:16px;color:#303133;font-weight:bold">5</div>
<svg class="a" style="left:363.2px;top:451.2px" width="5" height="7" viewBox="0 0 5 7"><path d="M1.4 0.7 3.9 3.5 1.4 6.3" fill="none" stroke="#44464b" stroke-width="0.9"/></svg>
<div class="a pg" style="left:386.7px">前往</div>
<div class="a pg c" style="left:403.6px;width:24.6px;border:0.7px solid transparent;line-height:13.6px">1</div>
<div class="a pg" style="left:430.4px">页</div>
<div class="a" style="left:1059.8px;top:66.9px;width:4.2px;height:30.6px;border-radius:2.1px;background:linear-gradient(180deg,#6b6b6b 0,#6b6b6b 56%,#58a868 60%,#4fa862 100%)"></div>
</div>
</body>
</html>
